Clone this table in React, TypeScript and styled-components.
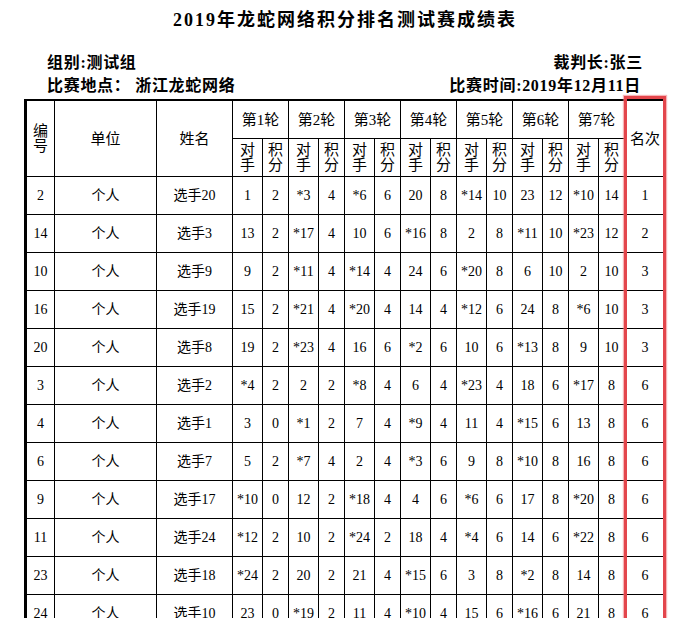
import React from "react";
import styled, { createGlobalStyle } from "styled-components";

const GlobalStyle = createGlobalStyle`
  html, body { margin: 0; padding: 0; background: #ffffff; }
  body { font-family: "Liberation Serif", "Noto Sans CJK SC", serif; color: #000; }
`;

const Page = styled.div`
  width: 642px;
  margin-left: 24px;
  padding-top: 8px;
`;

const Title = styled.h1`
  margin: 0;
  font-size: 18px;
  line-height: 24px;
  font-weight: 700;
  text-align: center;
  letter-spacing: 2px;
`;

const Info = styled.div`
  margin-top: 19px;
  padding: 0 23px;
  display: grid;
  grid-template-columns: 1fr auto;
  font-family: "Liberation Serif", "Noto Sans CJK SC", serif;
  font-size: 16px;
  line-height: 23px;
  font-weight: 700;
  letter-spacing: 0.7px;
`;

const InfoLeft = styled.div`
  text-align: left;
`;

const InfoRight = styled.div<{ $shift?: number }>`
  text-align: right;
  margin-right: ${(p) => p.$shift ?? 0}px;
`;

const TableWrap = styled.div`
  position: relative;
  margin-top: 2px;
`;

const Table = styled.table`
  width: 642px;
  table-layout: fixed;
  border-collapse: separate;
  border-spacing: 0;
  border-left: 3px solid #000;
  border-top: 2px solid #000;
`;

const Col = styled.col<{ $w: number }>`
  width: ${(p) => p.$w}px;
`;

const Cell = styled.td`
  box-sizing: border-box;
  height: 38px;
  padding: 0;
  border-right: 1px solid #000;
  border-bottom: 1px solid #000;
  text-align: center;
  vertical-align: middle;
  font-size: 14px;
  font-weight: 400;
  line-height: 16px;
  white-space: nowrap;
`;

const HeadCell = styled(Cell).attrs({ as: "th" })`
  font-size: 15px;
`;

const Stack = styled.span`
  display: inline-block;
  width: 1em;
  line-height: 15px;
  white-space: normal;
  word-break: break-all;
`;

const RankBox = styled.div`
  position: absolute;
  left: 600px;
  top: -3px;
  width: 42px;
  bottom: 0;
  box-sizing: border-box;
  border: 3px solid #e3464c;
  box-shadow: 0 0 1px 1px rgba(240, 120, 124, 0.55);
  pointer-events: none;
`;

type Row = [string, string, string, string[], string];

const rows: Row[] = [
  ["2", "个人", "选手20", ["1", "2", "*3", "4", "*6", "6", "20", "8", "*14", "10", "23", "12", "*10", "14"], "1"],
  ["14", "个人", "选手3", ["13", "2", "*17", "4", "10", "6", "*16", "8", "2", "8", "*11", "10", "*23", "12"], "2"],
  ["10", "个人", "选手9", ["9", "2", "*11", "4", "*14", "4", "24", "6", "*20", "8", "6", "10", "2", "10"], "3"],
  ["16", "个人", "选手19", ["15", "2", "*21", "4", "*20", "4", "14", "4", "*12", "6", "24", "8", "*6", "10"], "3"],
  ["20", "个人", "选手8", ["19", "2", "*23", "4", "16", "6", "*2", "6", "10", "6", "*13", "8", "9", "10"], "3"],
  ["3", "个人", "选手2", ["*4", "2", "2", "2", "*8", "4", "6", "4", "*23", "4", "18", "6", "*17", "8"], "6"],
  ["4", "个人", "选手1", ["3", "0", "*1", "2", "7", "4", "*9", "4", "11", "4", "*15", "6", "13", "8"], "6"],
  ["6", "个人", "选手7", ["5", "2", "*7", "4", "2", "4", "*3", "6", "9", "8", "*10", "8", "16", "8"], "6"],
  ["9", "个人", "选手17", ["*10", "0", "12", "2", "*18", "4", "4", "6", "*6", "6", "17", "8", "*20", "8"], "6"],
  ["11", "个人", "选手24", ["*12", "2", "10", "2", "*24", "2", "18", "4", "*4", "6", "14", "6", "*22", "8"], "6"],
  ["23", "个人", "选手18", ["*24", "2", "20", "2", "21", "4", "*15", "6", "3", "8", "*2", "8", "14", "8"], "6"],
  ["24", "个人", "选手10", ["23", "0", "*19", "2", "11", "4", "*10", "4", "15", "6", "*16", "6", "21", "8"], "6"],
];

const roundNums = [1, 2, 3, 4, 5, 6, 7];

export default function App() {
  return (
    <>
      <GlobalStyle />
      <Page>
        <Title>2019年龙蛇网络积分排名测试赛成绩表</Title>
        <Info>
          <InfoLeft>组别:测试组</InfoLeft>
          <InfoRight>裁判长:张三</InfoRight>
          <InfoLeft>比赛地点： 浙江龙蛇网络</InfoLeft>
          <InfoRight $shift={2}>比赛时间:2019年12月11日</InfoRight>
        </Info>
        <TableWrap>
          <Table>
            <colgroup>
              <Col $w={28} />
              <Col $w={102} />
              <Col $w={76} />
              {roundNums.map((r) => (
                <React.Fragment key={r}>
                  <Col $w={30} />
                  <Col $w={26} />
                </React.Fragment>
              ))}
              <Col $w={41} />
            </colgroup>
            <thead>
              <tr>
                <HeadCell rowSpan={2}>
                  <Stack>编号</Stack>
                </HeadCell>
                <HeadCell rowSpan={2}>单位</HeadCell>
                <HeadCell rowSpan={2}>姓名</HeadCell>
                {roundNums.map((r) => (
                  <HeadCell colSpan={2} key={r}>
                    第{r}轮
                  </HeadCell>
                ))}
                <HeadCell rowSpan={2}>名次</HeadCell>
              </tr>
              <tr>
                {roundNums.map((r) => (
                  <React.Fragment key={r}>
                    <HeadCell>
                      <Stack>对手</Stack>
                    </HeadCell>
                    <HeadCell>
                      <Stack>积分</Stack>
                    </HeadCell>
                  </React.Fragment>
                ))}
              </tr>
            </thead>
            <tbody>
              {rows.map((row, i) => (
                <tr key={i}>
                  <Cell>{row[0]}</Cell>
                  <Cell>{row[1]}</Cell>
                  <Cell>{row[2]}</Cell>
                  {row[3].map((v, j) => (
                    <Cell key={j}>{v}</Cell>
                  ))}
                  <Cell>{row[4]}</Cell>
                </tr>
              ))}
            </tbody>
          </Table>
          <RankBox />
        </TableWrap>
      </Page>
    </>
  );
}
